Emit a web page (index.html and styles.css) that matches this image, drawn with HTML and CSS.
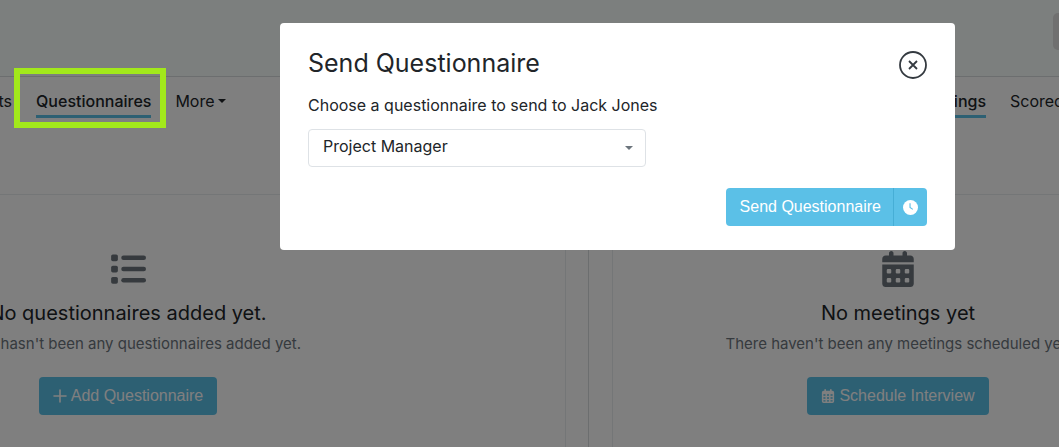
FILE: index.html
```html
<!DOCTYPE html>
<html lang="en">

<head>
  <meta charset="UTF-8" />
  <meta name="viewport" content="width=device-width, initial-scale=1.0" />
  <title>Send Questionnaire</title>
  <link rel="stylesheet" href="styles.css">
</head>

<body>

  <!-- Icons shared by the page -->
  <svg class="sprite" aria-hidden="true">
    <symbol id="icon-list" viewBox="0 0 512 512">
      <rect x="16" y="48" width="96" height="96" rx="24" />
      <rect x="16" y="208" width="96" height="96" rx="24" />
      <rect x="16" y="368" width="96" height="96" rx="24" />
      <rect x="160" y="64" width="352" height="64" rx="32" />
      <rect x="160" y="224" width="352" height="64" rx="32" />
      <rect x="160" y="384" width="352" height="64" rx="32" />
    </symbol>
    <symbol id="icon-calendar" viewBox="0 0 448 512">
      <path fill-rule="evenodd" d="M128 0c17.700 0 32 14.300 32 32v32h128V32c0-17.700 14.300-32 32-32s32 14.300 32 32v32h48c26.500 0 48 21.500 48 48v48H0v-48c0-26.500 21.500-48 48-48h48V32c0-17.700 14.300-32 32-32zM0 192h448v272c0 26.500-21.500 48-48 48H48c-26.500 0-48-21.500-48-48V192zM80 256a16 16 0 0 0-16 16v32a16 16 0 0 0 16 16h32a16 16 0 0 0 16-16v-32a16 16 0 0 0-16-16zM208 256a16 16 0 0 0-16 16v32a16 16 0 0 0 16 16h32a16 16 0 0 0 16-16v-32a16 16 0 0 0-16-16zM336 256a16 16 0 0 0-16 16v32a16 16 0 0 0 16 16h32a16 16 0 0 0 16-16v-32a16 16 0 0 0-16-16zM80 384a16 16 0 0 0-16 16v32a16 16 0 0 0 16 16h32a16 16 0 0 0 16-16v-32a16 16 0 0 0-16-16zM208 384a16 16 0 0 0-16 16v32a16 16 0 0 0 16 16h32a16 16 0 0 0 16-16v-32a16 16 0 0 0-16-16zM336 384a16 16 0 0 0-16 16v32a16 16 0 0 0 16 16h32a16 16 0 0 0 16-16v-32a16 16 0 0 0-16-16z" />
    </symbol>
    <symbol id="icon-calendar-grid" viewBox="0 0 448 512">
      <path fill-rule="evenodd" d="M120 0a30 30 0 0 1 30 30v34h148V30a30 30 0 0 1 60 0v34h26a64 64 0 0 1 64 64v320a64 64 0 0 1-64 64H64a64 64 0 0 1-64-64V128a64 64 0 0 1 64-64h26V30a30 30 0 0 1 30-30zM56 192v56h76v-56zM186 192v56h76v-56zM316 192v56h76v-56zM56 300v56h76v-56zM186 300v56h76v-56zM316 300v56h76v-56zM56 408v48h76v-48zM186 408v48h76v-48zM316 408v48h76v-48z" />
    </symbol>
    <symbol id="icon-plus" viewBox="0 0 14 14">
      <path d="M7 1v12M1 7h12" fill="none" stroke="currentColor" stroke-width="1.600" stroke-linecap="round" />
    </symbol>
    <symbol id="icon-clock" viewBox="0 0 16 16">
      <circle cx="8" cy="8" r="8" />
      <path class="hands" d="M7.500 3.500V8l3 2" />
    </symbol>
    <symbol id="icon-close" viewBox="0 0 28 28">
      <circle cx="14" cy="14" r="13" />
      <path d="M10 10l8 8M18 10l-8 8" />
    </symbol>
  </svg>

  <!-- Candidate page -->
  <div class="page">
    <header class="header">
      <button class="header-btn" type="button" aria-label="Actions"></button>
    </header>

    <main class="columns">
      <section class="column">
        <nav class="tabs tabs-left">
          <a href="#">Documents</a>
          <a href="#" class="active">Questionnaires</a>
          <a href="#" class="more">More</a>
        </nav>
        <div class="card">
          <svg class="card-icon"><use href="#icon-list" /></svg>
          <h2>No questionnaires added yet.</h2>
          <p>There hasn't been any questionnaires added yet.</p>
          <button class="btn" type="button"><svg class="btn-icon"><use href="#icon-plus" /></svg>Add Questionnaire</button>
        </div>
      </section>

      <section class="column">
        <nav class="tabs tabs-right">
          <a href="#" class="active">Meetings</a>
          <a href="#">Scorecards</a>
        </nav>
        <div class="card">
          <svg class="card-icon"><use href="#icon-calendar" /></svg>
          <h2>No meetings yet</h2>
          <p>There haven't been any meetings scheduled yet.</p>
          <button class="btn" type="button"><svg class="btn-icon"><use href="#icon-calendar-grid" /></svg>Schedule Interview</button>
        </div>
      </section>
    </main>
  </div>

  <!-- Modal -->
  <div class="overlay">
    <form class="modal" role="dialog" aria-labelledby="modalTitle">
      <div class="modal-header">
        <h1 id="modalTitle">Send Questionnaire</h1>
        <button class="close" type="button" aria-label="Close"><svg><use href="#icon-close" /></svg></button>
      </div>
      <label for="questionnaire">Choose a questionnaire to send to Jack Jones</label>
      <div class="select">
        <select id="questionnaire">
          <option>Project Manager</option>
        </select>
      </div>
      <div class="modal-footer">
        <button class="btn btn-send" type="button">Send Questionnaire</button>
        <button class="btn btn-later" type="button" aria-label="Send later"><svg><use href="#icon-clock" /></svg></button>
      </div>
    </form>
  </div>

  <div class="highlight"></div>

</body>

</html>
```
FILE: styles.css
```css
:root {
  --blue: #5bc0e7;
  --blue-dark: #46aed6;
  --text: #212529;
  --muted: #6c757d;
  --border: #dee2e6;
  --highlight: #a2e81b;
}

* {
  box-sizing: border-box;
}

body {
  margin: 0;
  height: 100vh;
  overflow: hidden;
  position: relative;
  font-family: Inter, sans-serif;
  font-size: 16px;
  line-height: 24px;
  color: var(--text);
  background: #fff;
}

h1,
h2,
p {
  margin: 0;
  font-weight: 400;
}

svg {
  display: block;
  fill: currentColor;
}

.sprite {
  position: absolute;
  width: 0;
  height: 0;
}

/* Page is wider than the window and runs off both sides */
.page {
  margin: 0 -149px 0 -332px;
}

.header {
  display: flex;
  justify-content: flex-end;
  padding: 13px 24px 26px;
  background: #f8fffc;
  border-bottom: 1px solid #d8dcde;
}

.header-btn {
  width: 131px;
  height: 37px;
  border: 0;
  border-radius: 5px;
  background: #e0e0e0;
}

.columns {
  display: grid;
  grid-template-columns: 921fr 619fr;
}

.column {
  min-width: 0;
  padding: 12px 24px 0 23px;
}

.column:first-child {
  padding: 12px 22px 0;
  border-right: 1px solid #d8dcde;
}

.tabs {
  display: flex;
  gap: 24px;
  height: 105px;
  align-items: flex-start;
}

.tabs-left {
  padding-left: 236px;
}

.tabs-right {
  padding-left: 303px;
}

.tabs a {
  padding-bottom: 2px;
  border-bottom: 3px solid transparent;
  color: var(--text);
  text-decoration: none;
}

.tabs .active {
  font-weight: 500;
  border-color: var(--blue);
}

.tabs .more {
  display: flex;
  align-items: center;
  gap: 3px;
}

.more::after {
  content: "";
  border: 4px solid transparent;
  border-top-color: currentColor;
  border-bottom: 0;
}

.card {
  display: flex;
  flex-direction: column;
  align-items: center;
  min-height: 300px;
  padding: 56px 24px;
  border: 1px solid #e9ecef;
  text-align: center;
}

.card-icon {
  width: 36px;
  height: 36px;
  margin-bottom: 14px;
  color: var(--muted);
}

.card h2 {
  font-size: 20px;
  margin-bottom: 7px;
}

.card p {
  font-size: 15px;
  margin-bottom: 21px;
  color: var(--muted);
}

.btn {
  display: flex;
  align-items: center;
  justify-content: center;
  height: 38px;
  padding: 0 14px;
  border: 0;
  border-radius: 4px;
  background: var(--blue);
  color: #fff;
  font-family: "Liberation Sans", Arial, sans-serif;
  font-size: 16px;
}

.btn-icon {
  width: 14px;
  height: 14px;
  margin-right: 4px;
}

.overlay {
  position: absolute;
  inset: 0;
  display: flex;
  justify-content: center;
  align-items: flex-start;
  padding: 23px 0 0 176px;
  background: rgba(0, 0, 0, 0.5);
}

.modal {
  width: 675px;
  padding: 24px 28px;
  border-radius: 4px;
  background: #fff;
}

.modal-header {
  display: flex;
  justify-content: space-between;
  align-items: flex-end;
  margin-bottom: 14px;
}

.modal h1 {
  font-size: 25px;
  line-height: 32px;
}

.close {
  padding: 0;
  border: 0;
  background: none;
  color: #343a40;
}

.close svg {
  width: 28px;
  height: 28px;
  fill: none;
  stroke: currentColor;
  stroke-width: 1.8;
}

.modal label {
  display: block;
  margin-bottom: 12px;
}

.select {
  position: relative;
  max-width: 338px;
  margin-bottom: 21px;
}

.select select {
  display: block;
  width: 100%;
  height: 38px;
  padding: 0 36px 4px 14px;
  border: 1px solid var(--border);
  border-radius: 4px;
  appearance: none;
  background: #fff;
  color: var(--text);
  font-family: inherit;
  font-size: 16px;
}

.select::after {
  content: "";
  position: absolute;
  top: 17px;
  right: 13px;
  border: 4px solid transparent;
  border-top-color: var(--muted);
  border-bottom: 0;
  pointer-events: none;
}

.modal-footer {
  display: flex;
  justify-content: flex-end;
}

.btn-send {
  border-radius: 4px 0 0 4px;
  padding: 0 12px 0 14px;
}

.btn-later {
  padding: 0 9px;
  border-left: 1px solid var(--blue-dark);
  border-radius: 0 4px 4px 0;
}

.btn-later svg {
  width: 15px;
  height: 15px;
}

.hands {
  fill: none;
  stroke: var(--blue);
  stroke-width: 1.2;
}

/* Marker drawn over the Questionnaires tab */
.highlight {
  position: absolute;
  top: 68px;
  left: 14px;
  width: 152px;
  height: 60px;
  border: 6px solid var(--highlight);
}
```
